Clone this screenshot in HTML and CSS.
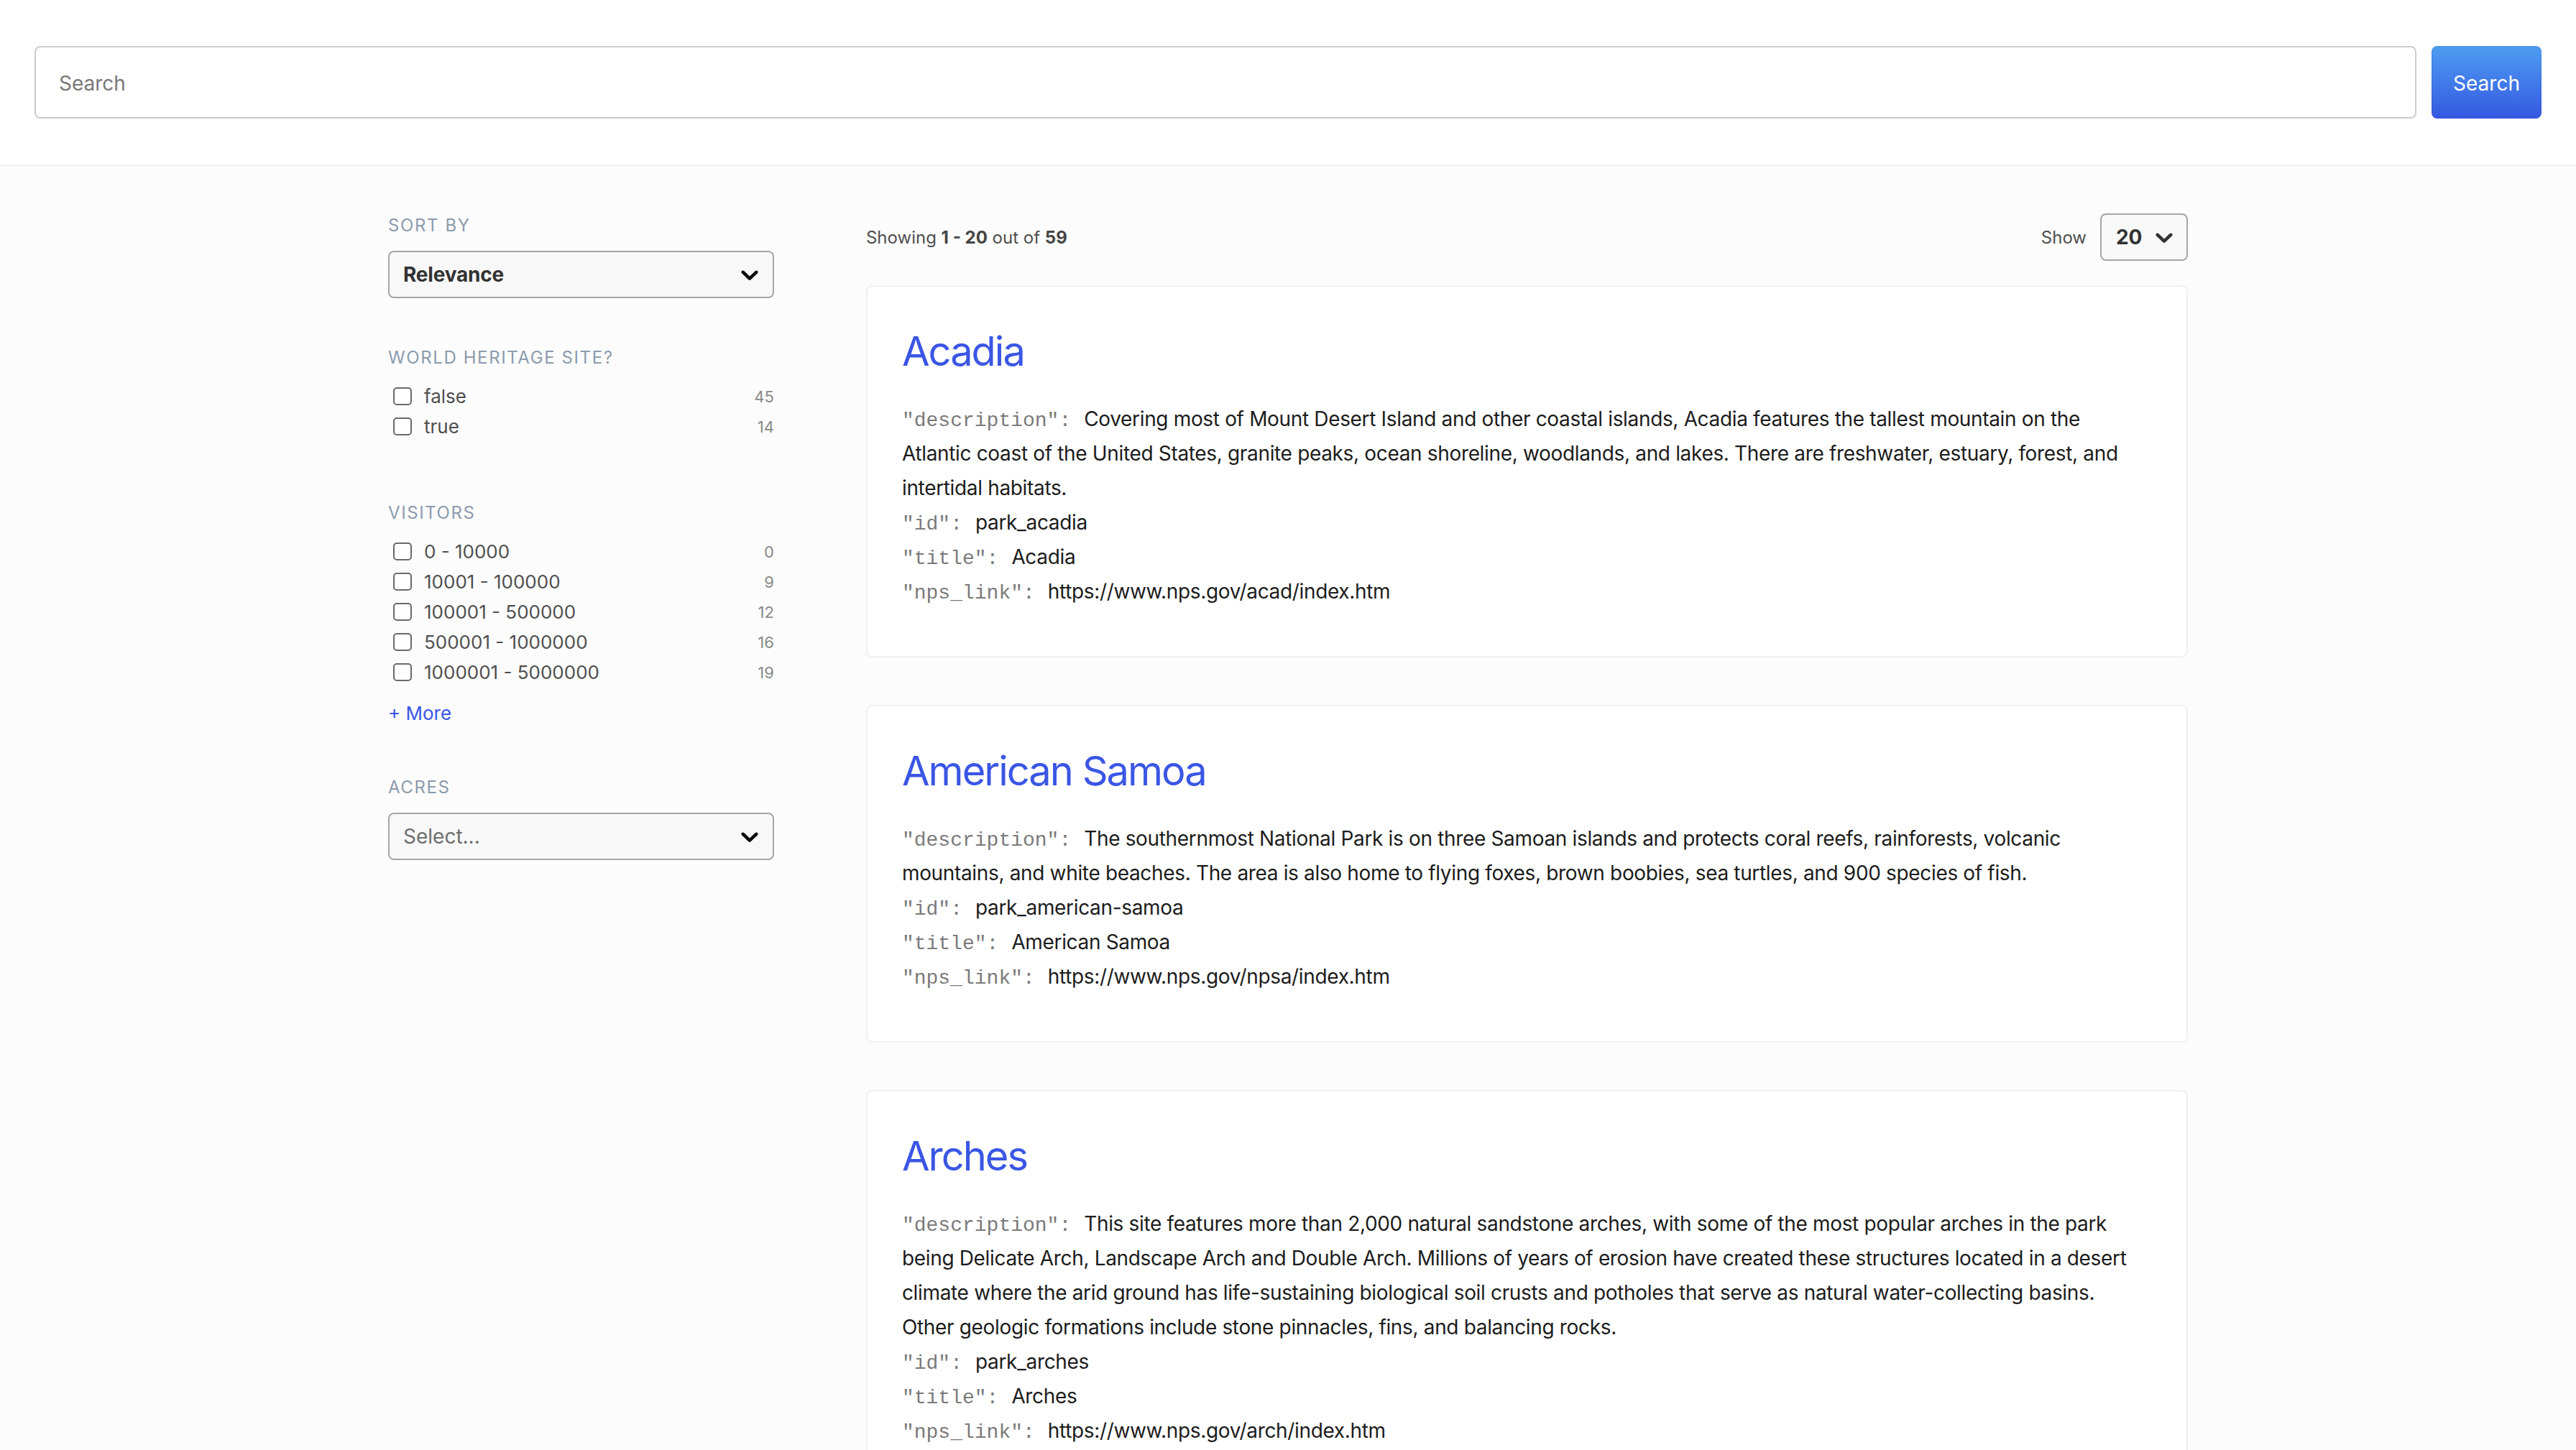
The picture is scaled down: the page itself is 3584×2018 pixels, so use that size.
FILE: index.html
```html
<!DOCTYPE html>
<html lang="en">
<head>
<meta charset="utf-8">
<title>National Parks Search</title>
<link rel="stylesheet" href="styles.css">
</head>
<body>
<div class="layout">
  <header class="layout-header">
    <form class="search-box">
      <input class="search-input" type="text" placeholder="Search">
      <button class="search-btn" type="button">Search</button>
    </form>
  </header>
  <div class="layout-body">
    <div class="body-inner">
      <aside class="sidebar">
        <div class="sorting">
          <div class="facet-title">Sort by</div>
          <div class="select">
            <span class="select-value">Relevance</span>
            <svg class="chevron" viewBox="0 0 20 20" width="40" height="40"><path d="M4.516 7.548c0.436-0.446 1.043-0.481 1.576 0l3.908 3.747 3.908-3.747c0.533-0.481 1.141-0.446 1.574 0 0.436 0.445 0.408 1.197 0 1.615-0.406 0.418-4.695 4.502-4.695 4.502-0.217 0.223-0.502 0.335-0.787 0.335s-0.57-0.112-0.789-0.335c0 0-4.287-4.084-4.695-4.502s-0.436-1.17 0-1.615z"/></svg>
          </div>
        </div>

        <div class="facet">
          <div class="facet-title">World Heritage Site?</div>
          <div class="facet-options">
            <label class="option"><span class="option-main"><input class="checkbox" type="checkbox"><span class="option-text">false</span></span><span class="option-count">45</span></label>
            <label class="option"><span class="option-main"><input class="checkbox" type="checkbox"><span class="option-text">true</span></span><span class="option-count">14</span></label>
          </div>
        </div>

        <div class="facet">
          <div class="facet-title">Visitors</div>
          <div class="facet-options">
            <label class="option"><span class="option-main"><input class="checkbox" type="checkbox"><span class="option-text">0 - 10000</span></span><span class="option-count">0</span></label>
            <label class="option"><span class="option-main"><input class="checkbox" type="checkbox"><span class="option-text">10001 - 100000</span></span><span class="option-count">9</span></label>
            <label class="option"><span class="option-main"><input class="checkbox" type="checkbox"><span class="option-text">100001 - 500000</span></span><span class="option-count">12</span></label>
            <label class="option"><span class="option-main"><input class="checkbox" type="checkbox"><span class="option-text">500001 - 1000000</span></span><span class="option-count">16</span></label>
            <label class="option"><span class="option-main"><input class="checkbox" type="checkbox"><span class="option-text">1000001 - 5000000</span></span><span class="option-count">19</span></label>
          </div>
          <button class="view-more" type="button">+ More</button>
        </div>

        <div class="facet">
          <div class="facet-title">Acres</div>
          <div class="select">
            <span class="select-placeholder">Select...</span>
            <svg class="chevron" viewBox="0 0 20 20" width="40" height="40"><path d="M4.516 7.548c0.436-0.446 1.043-0.481 1.576 0l3.908 3.747 3.908-3.747c0.533-0.481 1.141-0.446 1.574 0 0.436 0.445 0.408 1.197 0 1.615-0.406 0.418-4.695 4.502-4.695 4.502-0.217 0.223-0.502 0.335-0.787 0.335s-0.57-0.112-0.789-0.335c0 0-4.287-4.084-4.695-4.502s-0.436-1.17 0-1.615z"/></svg>
          </div>
        </div>
      </aside>

      <main class="main">
        <div class="main-header">
          <div class="paging-info">Showing <strong>1 - 20</strong> out of <strong>59</strong></div>
          <div class="results-per-page">
            <span class="rpp-label">Show</span>
            <div class="select select-small">
              <span class="select-value">20</span>
              <svg class="chevron chevron-gray" viewBox="0 0 20 20" width="40" height="40"><path d="M4.516 7.548c0.436-0.446 1.043-0.481 1.576 0l3.908 3.747 3.908-3.747c0.533-0.481 1.141-0.446 1.574 0 0.436 0.445 0.408 1.197 0 1.615-0.406 0.418-4.695 4.502-4.695 4.502-0.217 0.223-0.502 0.335-0.787 0.335s-0.57-0.112-0.789-0.335c0 0-4.287-4.084-4.695-4.502s-0.436-1.17 0-1.615z"/></svg>
            </div>
          </div>
        </div>

        <ul class="results">
          <li class="result">
            <h3 class="result-title"><a href="#">Acadia</a></h3>
            <ul class="result-details">
              <li><span class="result-key">"description":</span><span class="result-value">Covering most of Mount Desert Island and other coastal islands, Acadia features the tallest mountain on the Atlantic coast of the United States, granite peaks, ocean shoreline, woodlands, and lakes. There are freshwater, estuary, forest, and intertidal habitats.</span></li>
              <li><span class="result-key">"id":</span><span class="result-value">park_acadia</span></li>
              <li><span class="result-key">"title":</span><span class="result-value">Acadia</span></li>
              <li><span class="result-key">"nps_link":</span><span class="result-value">https://www.nps.gov/acad/index.htm</span></li>
            </ul>
          </li>
          <li class="result">
            <h3 class="result-title"><a href="#">American Samoa</a></h3>
            <ul class="result-details">
              <li><span class="result-key">"description":</span><span class="result-value">The southernmost National Park is on three Samoan islands and protects coral reefs, rainforests, volcanic mountains, and white beaches. The area is also home to flying foxes, brown boobies, sea turtles, and 900 species of fish.</span></li>
              <li><span class="result-key">"id":</span><span class="result-value">park_american-samoa</span></li>
              <li><span class="result-key">"title":</span><span class="result-value">American Samoa</span></li>
              <li><span class="result-key">"nps_link":</span><span class="result-value">https://www.nps.gov/npsa/index.htm</span></li>
            </ul>
          </li>
          <li class="result">
            <h3 class="result-title"><a href="#">Arches</a></h3>
            <ul class="result-details">
              <li><span class="result-key">"description":</span><span class="result-value">This site features more than 2,000 natural sandstone arches, with some of the most popular arches in the park being Delicate Arch, Landscape Arch and Double Arch. Millions of years of erosion have created these structures located in a desert climate where the arid ground has life-sustaining biological soil crusts and potholes that serve as natural water-collecting basins. Other geologic formations include stone pinnacles, fins, and balancing rocks.</span></li>
              <li><span class="result-key">"id":</span><span class="result-value">park_arches</span></li>
              <li><span class="result-key">"title":</span><span class="result-value">Arches</span></li>
              <li><span class="result-key">"nps_link":</span><span class="result-value">https://www.nps.gov/arch/index.htm</span></li>
            </ul>
          </li>
        </ul>
      </main>
    </div>
  </div>
</div>
</body>
</html>
```

FILE: styles.css
```css
html {
  scrollbar-width: none;
}

body {
  margin: 0;
  background: #fcfcfc;
  font-family: Inter, "Noto Sans", "Liberation Sans", sans-serif;
  color: #333;
}

.layout-header {
  background: #fff;
  padding: 64px 48px;
  border-bottom: 2px solid #efefef;
}

.search-box {
  display: flex;
  align-items: stretch;
  gap: 21px;
  margin: 0;
}

.search-input {
  flex: 1;
  box-sizing: border-box;
  height: 101px;
  border: 2px solid #cccccc;
  border-radius: 8px;
  padding: 2px 32px 0;
  font-family: inherit;
  font-size: 28px;
  color: #333;
  background: #fff;
  outline: none;
}

.search-input::placeholder {
  color: #787878;
}

.search-btn {
  flex-shrink: 0;
  width: 153px;
  border: none;
  border-radius: 8px;
  padding: 2px 0 0;
  font-family: inherit;
  font-size: 28px;
  color: #fff;
  background: linear-gradient(#4e9df1, #3558e2);
  box-shadow: inset 0 0 0 2px rgba(0, 0, 0, 0.03);
}

.body-inner {
  box-sizing: border-box;
  max-width: 2600px;
  margin: 0 auto;
  padding: 0 48px;
  display: flex;
}

.sidebar {
  box-sizing: border-box;
  width: 24%;
  padding: 64px 64px 0 0;
}

.main {
  box-sizing: border-box;
  width: 76%;
  padding: 66px 0 64px 64px;
}

.facet-title {
  font-size: 24px;
  line-height: 38px;
  text-transform: uppercase;
  letter-spacing: 1.6px;
  color: #8b9bad;
}

.select {
  box-sizing: border-box;
  height: 66px;
  margin-top: 16px;
  display: flex;
  align-items: center;
  justify-content: space-between;
  padding: 0 12px 0 19px;
  background: #f8f8f8;
  border: 2px solid #a6a6a6;
  border-radius: 8px;
  font-size: 28px;
}

.select-value {
  font-weight: 700;
  color: #333;
  letter-spacing: -0.2px;
}

.select-placeholder {
  color: #6e6e6e;
}

.chevron {
  display: block;
  fill: #0a0a0a;
  flex-shrink: 0;
}

.chevron-gray {
  fill: #333;
}

.facet {
  margin-top: 64px;
}

.facet-options {
  display: flex;
  flex-direction: column;
  gap: 16px;
  margin-top: 22px;
  padding-bottom: 24px;
}

.option {
  display: flex;
  align-items: center;
  justify-content: space-between;
  height: 26px;
  cursor: pointer;
}

.option-main {
  display: flex;
  align-items: center;
}

.checkbox {
  appearance: none;
  -webkit-appearance: none;
  box-sizing: border-box;
  width: 26px;
  height: 25px;
  margin: -2px 17px 0 7px;
  border: 2px solid #6a6a6a;
  border-radius: 5px;
  background: #fff;
}

.option-text {
  font-size: 26px;
  line-height: 26px;
  color: #4f4f4f;
}

.option-count {
  font-size: 22px;
  line-height: 26px;
  color: #888;
}

.view-more {
  display: block;
  border: none;
  background: transparent;
  padding: 0;
  font-family: inherit;
  font-size: 26px;
  line-height: 40px;
  color: #3a56e4;
  cursor: pointer;
}

.main-header {
  display: flex;
  align-items: center;
  justify-content: space-between;
  height: 66px;
  margin-bottom: 34px;
}

.paging-info {
  font-size: 24px;
  color: #4f4f4f;
}

.paging-info strong {
  font-weight: 700;
  color: #444;
}

.results-per-page {
  display: flex;
  align-items: center;
}

.rpp-label {
  font-size: 24px;
  color: #4f4f4f;
  margin-right: 19px;
}

.select-small {
  width: 122px;
  margin-top: 0;
  padding: 0 11px 0 20px;
}

.results {
  list-style: none;
  margin: 0;
  padding: 0;
}

.result {
  background: #fff;
  border: 2px solid #f0f0f0;
  border-radius: 8px;
  padding: 48px 54px 66px 48px;
  margin-bottom: 66px;
}

.result-title {
  margin: 0 0 28px;
  font-size: 56px;
  line-height: 84px;
  font-weight: 400;
  letter-spacing: -2px;
}

.result-title a {
  color: #3a56e4;
  text-decoration: none;
}

.result-details {
  list-style: none;
  margin: 0;
  padding: 0;
}

.result-details li {
  font-size: 28px;
  line-height: 48px;
  color: #1c1c1c;
}

.result-value {
  letter-spacing: -0.34px;
}

.result-key {
  font-family: "Liberation Mono", "DejaVu Sans Mono", monospace;
  font-size: 28px;
  line-height: 1;
  color: #7a7a7a;
  margin-right: 18px;
}
```
